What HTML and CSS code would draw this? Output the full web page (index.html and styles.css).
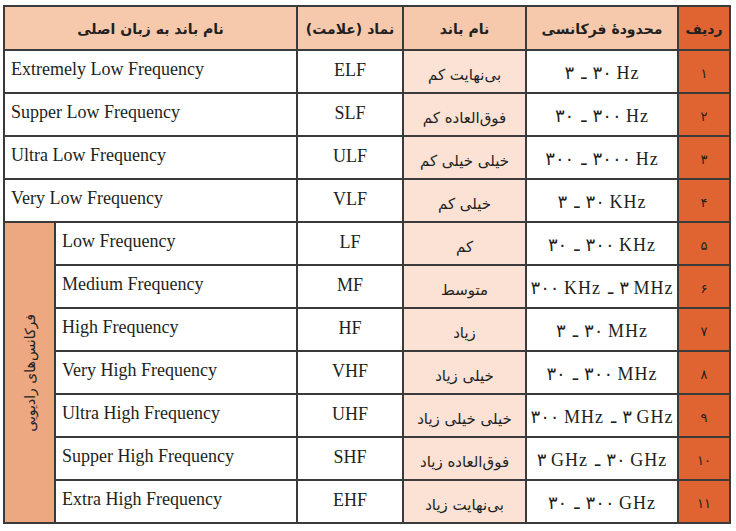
FILE: index.html
```html
<!DOCTYPE html>
<html lang="fa">
<head>
<meta charset="utf-8">
<title>باندهای فرکانسی</title>
<link rel="stylesheet" href="styles.css">
</head>
<body>
<div class="freq-table" dir="rtl">
  <div class="cell head radif">ردیف</div>
  <div class="cell head">محدودهٔ فرکانسی</div>
  <div class="cell head">نام باند</div>
  <div class="cell head">نماد (علامت)</div>
  <div class="cell head wide">نام باند به زبان اصلی</div>

  <div class="cell num">۱</div>
  <div class="cell range">۳<span class="dash">ـ</span>۳۰ Hz</div>
  <div class="cell fa">بی‌نهایت کم</div>
  <div class="cell sym">ELF</div>
  <div class="cell en wide">Extremely Low Frequency</div>

  <div class="cell num">۲</div>
  <div class="cell range">۳۰<span class="dash">ـ</span>۳۰۰ Hz</div>
  <div class="cell fa">فوق‌العاده کم</div>
  <div class="cell sym">SLF</div>
  <div class="cell en wide">Supper Low Frequency</div>

  <div class="cell num">۳</div>
  <div class="cell range">۳۰۰<span class="dash">ـ</span>۳۰۰۰ Hz</div>
  <div class="cell fa">خیلی خیلی کم</div>
  <div class="cell sym">ULF</div>
  <div class="cell en wide">Ultra Low Frequency</div>

  <div class="cell num">۴</div>
  <div class="cell range">۳<span class="dash">ـ</span>۳۰ KHz</div>
  <div class="cell fa">خیلی کم</div>
  <div class="cell sym">VLF</div>
  <div class="cell en wide">Very Low Frequency</div>

  <div class="cell num">۵</div>
  <div class="cell range">۳۰<span class="dash">ـ</span>۳۰۰ KHz</div>
  <div class="cell fa">کم</div>
  <div class="cell sym">LF</div>
  <div class="cell en">Low Frequency</div>
  <div class="cell group"><span class="vtext">فرکانس‌های رادیویی</span></div>

  <div class="cell num">۶</div>
  <div class="cell range">۳۰۰ KHz<span class="dash">ـ</span>۳ MHz</div>
  <div class="cell fa">متوسط</div>
  <div class="cell sym">MF</div>
  <div class="cell en">Medium Frequency</div>

  <div class="cell num">۷</div>
  <div class="cell range">۳<span class="dash">ـ</span>۳۰ MHz</div>
  <div class="cell fa">زیاد</div>
  <div class="cell sym">HF</div>
  <div class="cell en">High Frequency</div>

  <div class="cell num">۸</div>
  <div class="cell range">۳۰<span class="dash">ـ</span>۳۰۰ MHz</div>
  <div class="cell fa">خیلی زیاد</div>
  <div class="cell sym">VHF</div>
  <div class="cell en">Very High Frequency</div>

  <div class="cell num">۹</div>
  <div class="cell range">۳۰۰ MHz<span class="dash">ـ</span>۳ GHz</div>
  <div class="cell fa">خیلی خیلی زیاد</div>
  <div class="cell sym">UHF</div>
  <div class="cell en">Ultra High Frequency</div>

  <div class="cell num">۱۰</div>
  <div class="cell range">۳ GHz<span class="dash">ـ</span>۳۰ GHz</div>
  <div class="cell fa">فوق‌العاده زیاد</div>
  <div class="cell sym">SHF</div>
  <div class="cell en">Supper High Frequency</div>

  <div class="cell num">۱۱</div>
  <div class="cell range">۳۰<span class="dash">ـ</span>۳۰۰ GHz</div>
  <div class="cell fa">بی‌نهایت زیاد</div>
  <div class="cell sym">EHF</div>
  <div class="cell en">Extra High Frequency</div>
</div>
</body>
</html>
```
FILE: styles.css
```css
html, body {
  margin: 0;
  padding: 0;
  background: #ffffff;
}

body {
  font-family: "Liberation Serif", "DejaVu Sans", serif;
  color: #231f20;
}

.freq-table {
  margin: 5px 0 0 3px;
  width: 728px;
  box-sizing: border-box;
  display: grid;
  grid-template-columns: 50px 150px 121px 104px 240px 49px;
  grid-template-rows: 42px repeat(11, 41px);
  gap: 2px;
  padding: 2px;
  background: #3a3a3a;
}

.cell {
  background: #ffffff;
  display: flex;
  align-items: center;
  justify-content: center;
  white-space: nowrap;
  overflow: hidden;
}

.head {
  background: #f6c9ad;
  font-family: "DejaVu Sans", sans-serif;
  font-weight: bold;
  font-size: 14px;
  padding-top: 2px;
}

.head.radif {
  background: #df6431;
}

.wide {
  grid-column: span 2;
}

.num {
  background: #df6431;
  font-family: "DejaVu Sans", sans-serif;
  font-size: 13px;
  letter-spacing: 2px;
  padding-top: 4px;
}

.range {
  direction: ltr;
  font-size: 18px;
  letter-spacing: 1px;
  padding-top: 2px;
}

.dash {
  unicode-bidi: isolate;
  display: inline-block;
  font-family: "DejaVu Sans", sans-serif;
  font-size: 18px;
  letter-spacing: 0;
  margin: 0 6px 0 7px;
}

.fa {
  background: #fbe2d5;
  font-family: "DejaVu Sans", sans-serif;
  font-size: 15px;
  padding-top: 6px;
}

.sym {
  font-size: 18px;
  padding-bottom: 2px;
}

.en {
  direction: ltr;
  justify-content: flex-start;
  padding: 0 0 4px 6px;
  font-size: 18px;
}

.group {
  grid-column: 6;
  grid-row: 6 / span 7;
  background: #eda882;
}

.vtext {
  writing-mode: vertical-rl;
  transform: rotate(180deg);
  font-family: "DejaVu Sans", sans-serif;
  font-size: 14px;
}
```
